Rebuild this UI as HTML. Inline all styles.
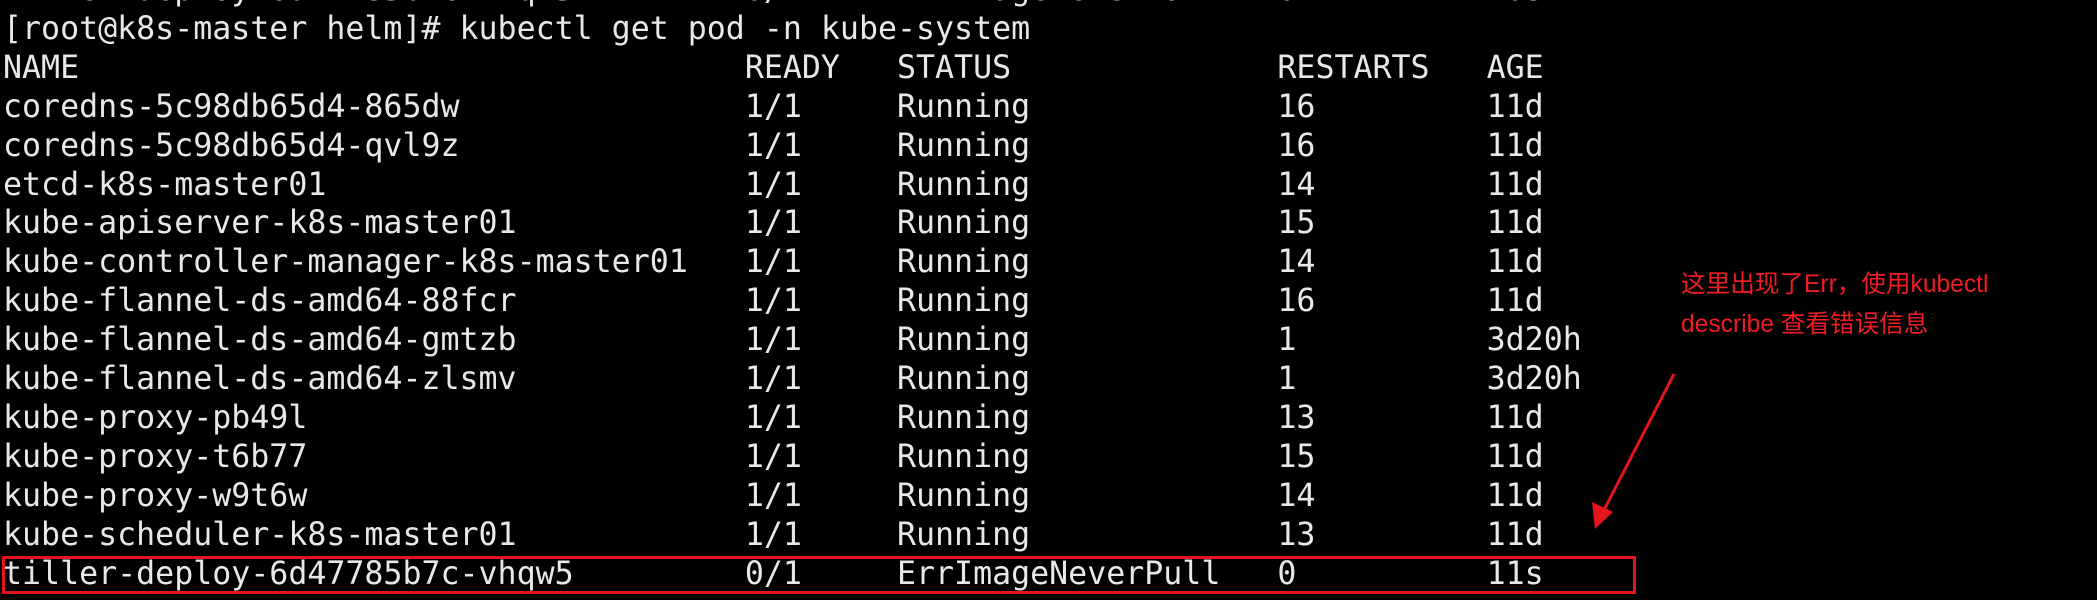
<!DOCTYPE html>
<html><head><meta charset="utf-8"><style>
html,body{margin:0;padding:0;background:#000;width:2097px;height:600px;overflow:hidden;position:relative}
pre{position:absolute;left:3px;top:-29px;margin:0;font-family:"DejaVu Sans Mono","Liberation Mono",monospace;font-size:31.6px;line-height:38.9px;color:#e8e8e8}
.box{position:absolute;left:2px;top:556px;width:1628px;height:32px;border:3px solid #e3141c}
.note{position:absolute;left:1681px;top:265px;font-family:"Liberation Sans","Noto Sans CJK SC",sans-serif;font-size:24.6px;line-height:40px;color:#ee1c24;white-space:nowrap}
svg{position:absolute;left:0;top:0}
</style></head><body>
<pre>tiller-deploy-6d47785b7c-vhqw5         0/1     ErrImageNeverPull   0          10s
[root@k8s-master helm]# kubectl get pod -n kube-system
NAME                                   READY   STATUS              RESTARTS   AGE
coredns-5c98db65d4-865dw               1/1     Running             16         11d
coredns-5c98db65d4-qvl9z               1/1     Running             16         11d
etcd-k8s-master01                      1/1     Running             14         11d
kube-apiserver-k8s-master01            1/1     Running             15         11d
kube-controller-manager-k8s-master01   1/1     Running             14         11d
kube-flannel-ds-amd64-88fcr            1/1     Running             16         11d
kube-flannel-ds-amd64-gmtzb            1/1     Running             1          3d20h
kube-flannel-ds-amd64-zlsmv            1/1     Running             1          3d20h
kube-proxy-pb49l                       1/1     Running             13         11d
kube-proxy-t6b77                       1/1     Running             15         11d
kube-proxy-w9t6w                       1/1     Running             14         11d
kube-scheduler-k8s-master01            1/1     Running             13         11d
tiller-deploy-6d47785b7c-vhqw5         0/1     ErrImageNeverPull   0          11s</pre>
<div class="box"></div>
<div class="note">这里出现了Err，使用kubectl<br>describe 查看错误信息</div>
<svg width="2097" height="600"><line x1="1674" y1="374" x2="1604" y2="510" stroke="#e3141c" stroke-width="3"/><polygon points="1595,529 1592,502 1613,512" fill="#e3141c"/></svg>
</body></html>
